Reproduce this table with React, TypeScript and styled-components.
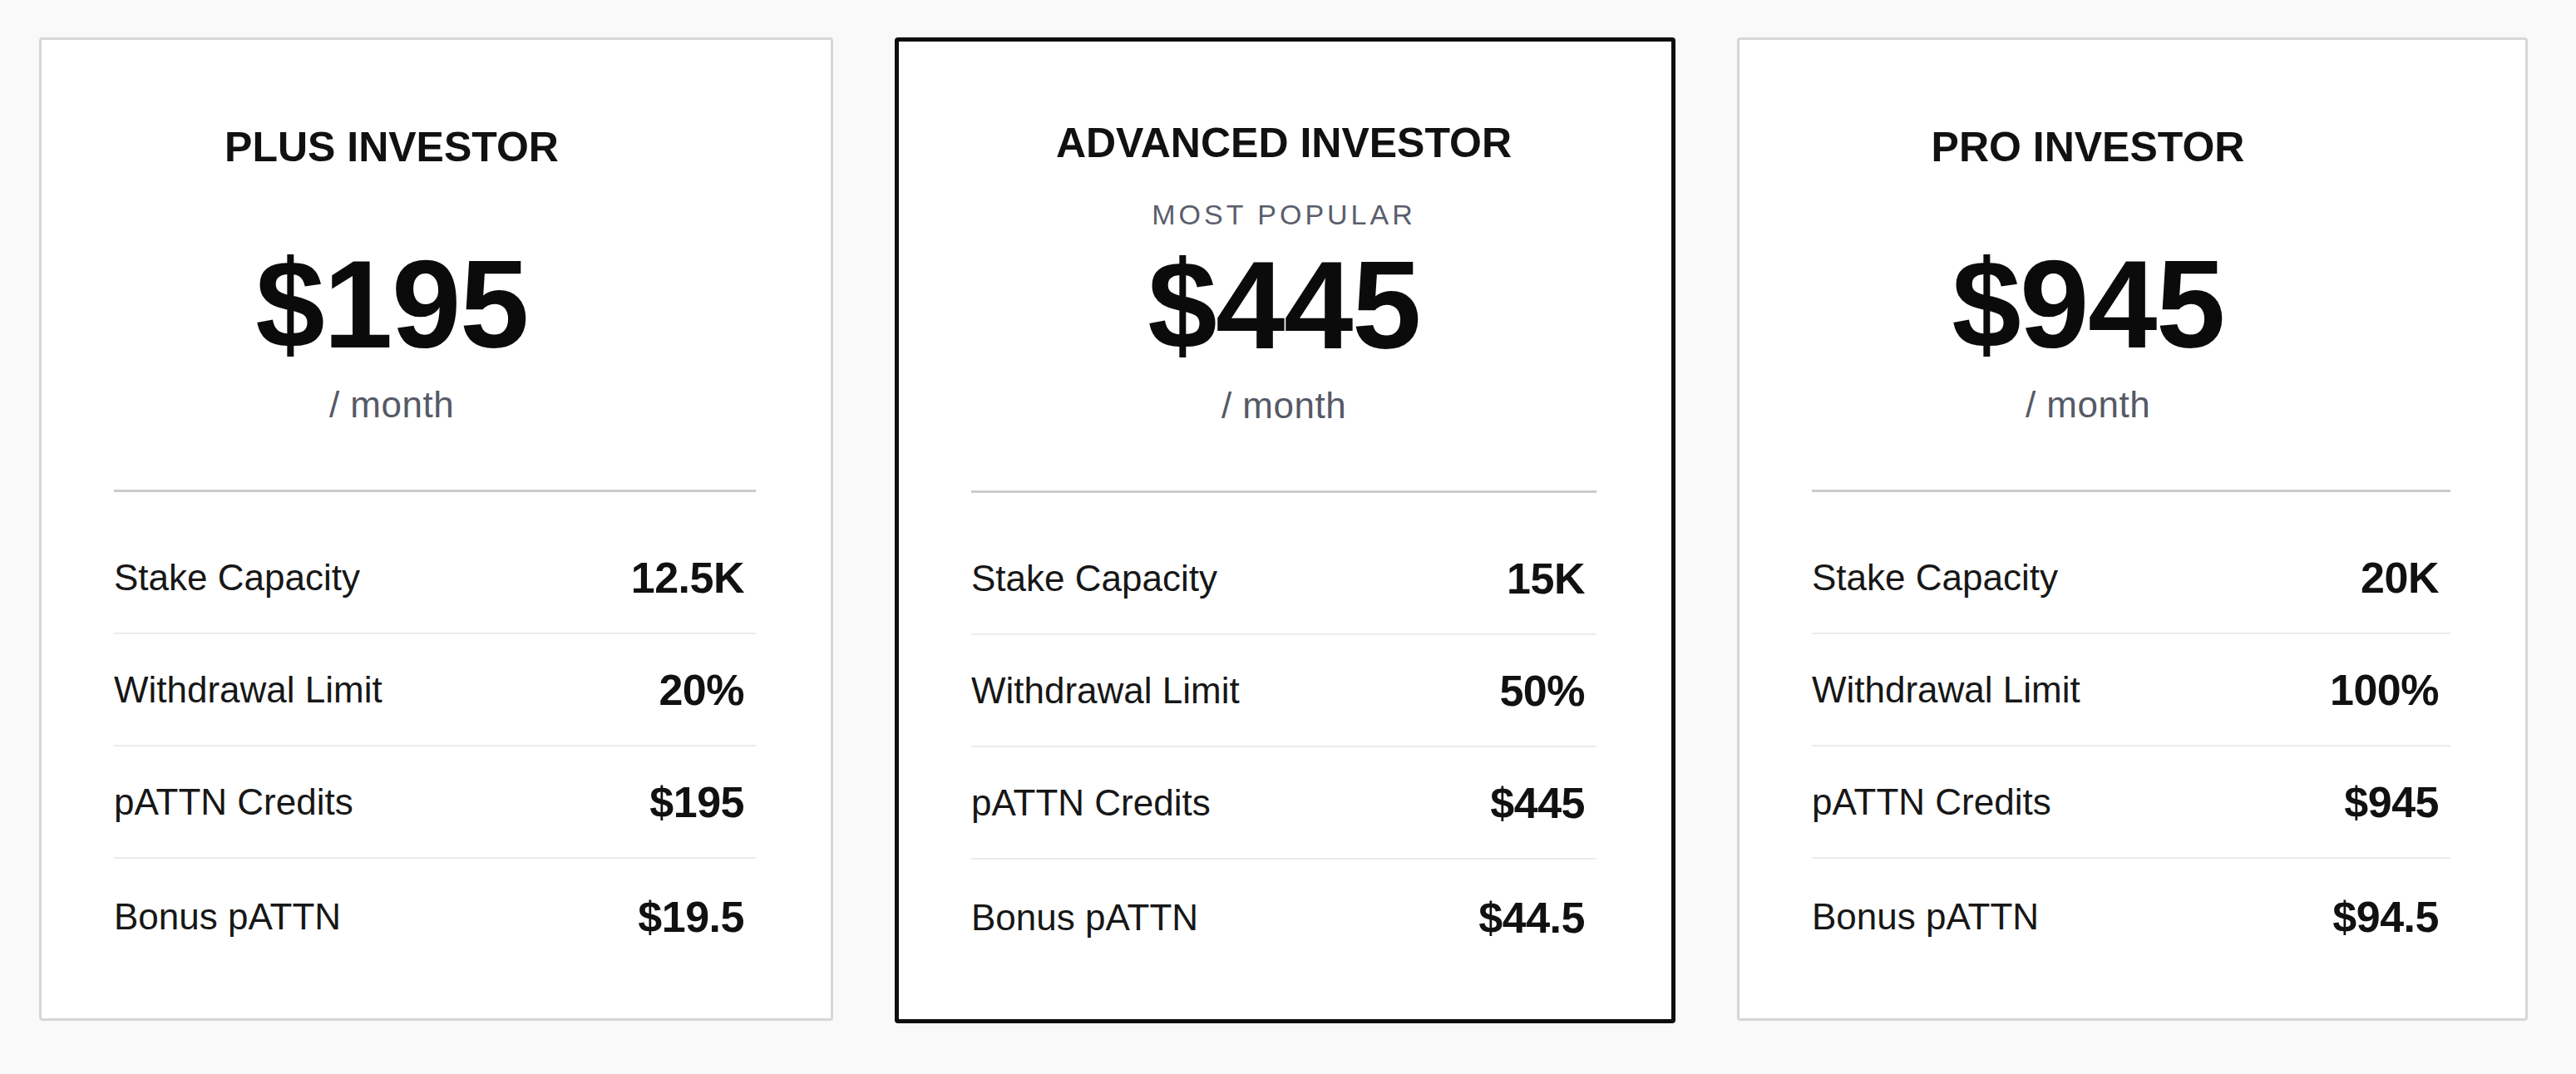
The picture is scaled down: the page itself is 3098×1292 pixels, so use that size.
import React from "react";
import styled, { createGlobalStyle } from "styled-components";

const GlobalStyle = createGlobalStyle`
  html, body {
    margin: 0;
    padding: 0;
    background: #f9f9f9;
    font-family: "Liberation Sans", Arial, Helvetica, sans-serif;
  }
  * { box-sizing: border-box; }
`;

const Page = styled.main`
  display: grid;
  grid-template-columns: 955fr 939fr 951fr;
  column-gap: 74px;
  align-items: stretch;
  padding: 45px 58px 0 47px;
  width: 3098px;
  min-height: 1292px;
`;

const Card = styled.section<{ $featured?: boolean }>`
  display: flex;
  flex-direction: column;
  background: #ffffff;
  border: ${(p) => (p.$featured ? "5px solid #0e0e0e" : "3px solid #d6d6d6")};
  border-radius: 4px;
  padding: ${(p) => (p.$featured ? "97px" : "104px")} 90px 56px 87px;
  align-self: start;
`;

const Header = styled.header<{ $featured?: boolean }>`
  display: flex;
  flex-direction: column;
  align-items: center;
  padding-right: ${(p) => (p.$featured ? "0" : "104px")};
`;

const Title = styled.h2`
  margin: 0;
  font-size: 50px;
  font-weight: 700;
  line-height: 1;
  color: #111111;
`;

const Tag = styled.div`
  margin-top: 44px;
  font-size: 34px;
  line-height: 1;
  letter-spacing: 4px;
  color: #5a5e6d;
`;

const Price = styled.div<{ $featured?: boolean }>`
  margin-top: ${(p) => (p.$featured ? "17px" : "89px")};
  font-size: 150px;
  font-weight: 700;
  line-height: 1;
  letter-spacing: -1.5px;
  color: #0b0b0b;
`;

const Period = styled.div`
  margin-top: 24px;
  font-size: 44px;
  line-height: 1;
  letter-spacing: 0.5px;
  color: #555a66;
`;

const Divider = styled.hr`
  margin: 80px 0 0;
  border: none;
  height: 3px;
  background: #cbcbcb;
`;

const Rows = styled.ul`
  list-style: none;
  margin: 36px 0 0;
  padding: 0;
`;

const Row = styled.li`
  display: flex;
  justify-content: space-between;
  align-items: center;
  height: 133px;
  box-sizing: content-box;
  padding-right: 14px;
  border-bottom: 2px solid #ebebeb;

  &:last-child {
    border-bottom: none;
    padding-top: 3px;
  }
`;

const Label = styled.span`
  font-size: 44px;
  line-height: 1;
  color: #171717;
`;

const Value = styled.span`
  font-size: 52px;
  font-weight: 700;
  line-height: 1;
  letter-spacing: -0.5px;
  color: #111111;
`;

type Plan = {
  name: string;
  price: string;
  featured?: boolean;
  rows: [string, string][];
};

const plans: Plan[] = [
  {
    name: "PLUS INVESTOR",
    price: "$195",
    rows: [
      ["Stake Capacity", "12.5K"],
      ["Withdrawal Limit", "20%"],
      ["pATTN Credits", "$195"],
      ["Bonus pATTN", "$19.5"],
    ],
  },
  {
    name: "ADVANCED INVESTOR",
    price: "$445",
    featured: true,
    rows: [
      ["Stake Capacity", "15K"],
      ["Withdrawal Limit", "50%"],
      ["pATTN Credits", "$445"],
      ["Bonus pATTN", "$44.5"],
    ],
  },
  {
    name: "PRO INVESTOR",
    price: "$945",
    rows: [
      ["Stake Capacity", "20K"],
      ["Withdrawal Limit", "100%"],
      ["pATTN Credits", "$945"],
      ["Bonus pATTN", "$94.5"],
    ],
  },
];

export default function App() {
  return (
    <>
      <GlobalStyle />
      <Page>
        {plans.map((plan) => (
          <Card key={plan.name} $featured={plan.featured}>
            <Header $featured={plan.featured}>
              <Title>{plan.name}</Title>
              {plan.featured && <Tag>MOST POPULAR</Tag>}
              <Price $featured={plan.featured}>{plan.price}</Price>
              <Period>/ month</Period>
            </Header>
            <Divider />
            <Rows>
              {plan.rows.map(([label, value]) => (
                <Row key={label}>
                  <Label>{label}</Label>
                  <Value>{value}</Value>
                </Row>
              ))}
            </Rows>
          </Card>
        ))}
      </Page>
    </>
  );
}
